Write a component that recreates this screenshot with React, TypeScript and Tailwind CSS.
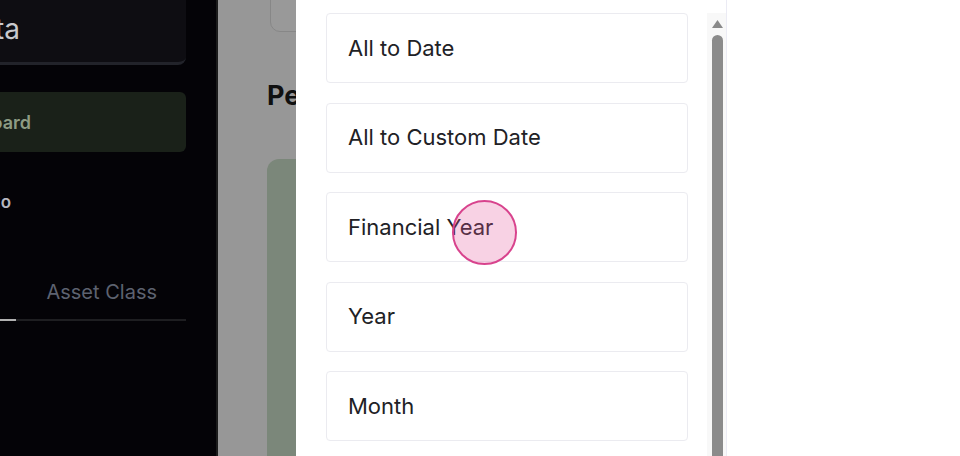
import { ReactNode } from 'react'

const periods = ['All to Date', 'All to Custom Date', 'Financial Year', 'Year', 'Month']

function Sidebar() {
  return (
    <aside className="flex h-full w-[216px] flex-none flex-col items-end overflow-hidden bg-[#040307] pr-[30px]">
      <div className="flex h-[65px] w-[300px] flex-none items-center justify-end rounded-br-lg border-b-[3px] border-[#22232a] bg-[#0e0d12] pb-[5px] pr-[166px] text-[28px] text-[#c9c9ce]">
        Data
      </div>
      <div className="mt-[27px] flex h-[60px] w-[300px] flex-none items-center justify-end rounded-md bg-[#1a2119] pr-[155px] text-[18px] font-semibold text-[#8d9c84]">
        Dashboard
      </div>
      <div className="mt-[38px] flex w-[300px] flex-none justify-end pr-[175px] text-[17px] font-semibold text-[#b6b7bf]">
        Portfolio
      </div>
      <div className="mt-[63px] flex w-[300px] flex-none flex-col">
        <div className="flex justify-end whitespace-nowrap pb-[14px] pr-[29px] text-[20px] leading-[26px] text-[#5d6270]">
          <span className="flex-none pr-[80px]">Holdings</span>
          <span className="flex-none">Asset Class</span>
        </div>
        <div className="flex h-[2px] bg-[#1e1e21]">
          <div className="w-[130px] bg-[#b1b1b1]" />
        </div>
      </div>
    </aside>
  )
}

function Backdrop() {
  return (
    <div className="flex h-full w-[80px] flex-none flex-col overflow-hidden border-l-2 border-[#1b1b1b] bg-[#979797] pl-[49px]">
      <div className="-mt-2 ml-[3px] h-[40px] w-[80px] flex-none rounded-bl-[10px] border border-[#878787] bg-[#999999]" />
      <div className="mt-[50px] whitespace-nowrap text-[27px] font-bold leading-none text-[#101010]">
        Performance
      </div>
      <div className="mt-[50px] w-[80px] flex-1 rounded-tl-[12px] bg-[#7b877a]" />
    </div>
  )
}

function PeriodItem({ children }: { children: ReactNode }) {
  return (
    <div className="flex h-[70px] w-[362px] flex-none items-center rounded-[4px] border border-[#ebebf0] bg-white pl-[21px] text-[22px] text-[#212125]">
      {children}
    </div>
  )
}

function Scrollbar() {
  return (
    <div className="mt-[13px] flex h-full w-[19px] flex-none flex-col items-center bg-[#f8f8f8] pl-[2px]">
      <svg width="13" height="10" viewBox="0 0 13 10" className="mt-[6px]">
        <path d="M6.5 1 L12 9 L1 9 Z" fill="#8a8a8a" />
      </svg>
      <div className="mt-[6px] w-[11px] flex-1 rounded-t-full bg-[#8b8b8b]" />
    </div>
  )
}

export default function App() {
  return (
    <div className="flex h-[456px] w-[960px] overflow-hidden bg-white" style={{ fontFamily: 'Inter, "Noto Sans", sans-serif' }}>
      <Sidebar />
      <Backdrop />
      <div className="flex h-full flex-1 bg-white">
        <div className="flex h-full w-[431px] flex-none border-r border-[#ebebf4]">
          <div className="relative flex flex-1 flex-col gap-[19.5px] pl-[30px] pt-[13px]">
            {periods.map((p) => (
              <PeriodItem key={p}>{p}</PeriodItem>
            ))}
            <div className="absolute left-[156px] top-[200px] h-[65px] w-[65px] rounded-full border-2 border-[#d8438d] bg-[rgba(228,90,155,0.27)]" />
          </div>
          <Scrollbar />
        </div>
      </div>
    </div>
  )
}
